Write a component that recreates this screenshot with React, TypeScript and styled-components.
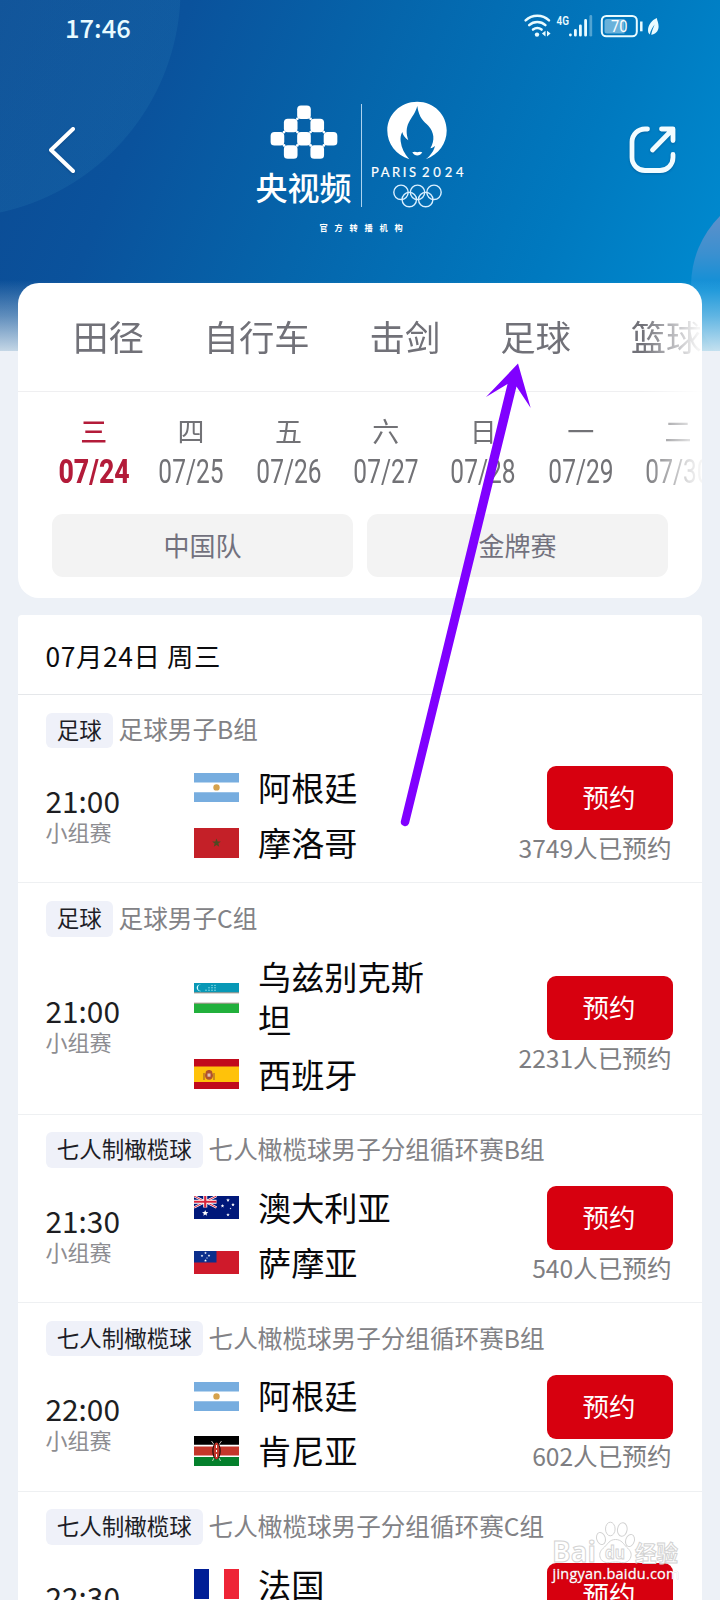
import React from 'react';
import styled, { createGlobalStyle } from 'styled-components';

const GlobalStyle = createGlobalStyle`
  *, *::before, *::after { box-sizing: border-box; }
  html, body { margin: 0; padding: 0; }
  body {
    background: #edf1f7;
    font-family: "Noto Sans CJK SC", "Noto Sans", sans-serif;
  }
  button { font-family: inherit; border: 0; margin: 0; }
`;

const Screen = styled.div`
  position: relative;
  width: 720px;
  height: 1600px;
  overflow: hidden;
  background: #edf1f7;
`;

const Hero = styled.header`
  position: relative;
  height: 351px;
  margin-bottom: -68px;
  overflow: hidden;
  background:
    radial-gradient(circle 229px at -48px -11px, rgba(40, 125, 180, 0.22) 99.6%, transparent 100%),
    linear-gradient(113deg, #0c4a93 0%, #0a529c 22%, #0565ab 46%, #0079bf 75%, #008dd2 100%);
`;

const Bubble = styled.span`
  position: absolute;
  left: 691px;
  top: 187px;
  width: 198px;
  height: 198px;
  border-radius: 50%;
  background: linear-gradient(180deg, #5f90ca 14%, #3a90d0 34%, #0a90d8 52%);
`;

const HeroFade = styled.span`
  position: absolute;
  inset: 280px 0 0 0;
  background: linear-gradient(180deg, rgba(232, 240, 244, 0) 0%, rgba(232, 240, 244, 0.38) 50%, rgba(232, 240, 244, 0.84) 100%);
`;

const StatusBar = styled.div`
  position: relative;
  display: flex;
  align-items: center;
  justify-content: space-between;
  height: 54px;
  padding: 0 58px 0 65px;
  color: #e9fbff;
`;

const Clock = styled.span`
  font-size: 25.5px;
  font-weight: 500;
  line-height: 54px;
`;

const NavBar = styled.div`
  position: relative;
  display: flex;
  align-items: flex-start;
  justify-content: space-between;
  padding: 46px 40px 0 44px;
`;

const NavButton = styled.button`
  margin-top: 24px;
  padding: 0;
  background: none;
  line-height: 0;
  filter: drop-shadow(0 1px 1px rgba(0, 40, 90, 0.3));
`;

const Brand = styled.div`
  display: flex;
  flex-direction: column;
  align-items: center;
  width: 220px;
  margin-left: 9px;
  color: #fff;
`;

const Lockup = styled.div`
  display: flex;
  width: 216px;
  height: 108px;
`;

const Channel = styled.div`
  display: flex;
  flex-direction: column;
  align-items: center;
  width: 110px;
  padding: 5px 4px 0 0;
  svg { display: block; }
`;

const ChannelName = styled.span`
  margin-top: 4px;
  font-size: 32px;
  line-height: 44px;
  font-weight: 500;
`;

const Divider = styled.i`
  width: 1px;
  height: 103px;
  margin-top: 4px;
  background: rgba(215, 238, 255, 0.8);
`;

const Games = styled.div`
  padding-left: 8px;
  svg { display: block; }
`;

const Caption = styled.span`
  margin: 9px 0 0 12px;
  font-size: 8.2px;
  line-height: 20px;
  font-weight: 700;
  letter-spacing: 6.8px;
`;

const FilterCard = styled.section`
  position: relative;
  width: 684px;
  height: 315px;
  margin: 0 auto;
  overflow: hidden;
  border-radius: 21px;
  background: #fff;
`;

const fadeRight = 'linear-gradient(90deg, #000 0, #000 624px, rgba(0,0,0,.08) 680px)';

const SportTabs = styled.nav`
  display: flex;
  gap: 59.8px;
  height: 109px;
  padding-left: 55px;
  border-bottom: 1px solid #efeff1;
  -webkit-mask-image: ${fadeRight};
  mask-image: ${fadeRight};
`;

const SportTab = styled.span`
  flex: none;
  color: #717178;
  font-size: 35.4px;
  line-height: 105px;
`;

const Days = styled.div`
  display: flex;
  height: 122px;
  padding: 21px 0 0 27px;
  -webkit-mask-image: ${fadeRight};
  mask-image: ${fadeRight};
`;

const Day = styled.div<{ $on?: boolean }>`
  display: flex;
  flex: 0 0 97.4px;
  flex-direction: column;
  align-items: center;
  color: ${(p) => (p.$on ? '#b31b39' : '#727276')};
  font-weight: ${(p) => (p.$on ? 500 : 400)};
`;

const Weekday = styled.span`
  font-size: 27px;
  line-height: 36px;
`;

const DayNumber = styled.span<{ $on?: boolean }>`
  margin-top: 3px;
  font-family: Roboto, sans-serif;
  font-size: 33.8px;
  line-height: 40px;
  font-weight: ${(p) => (p.$on ? 800 : 400)};
  transform: scaleX(${(p) => (p.$on ? 0.79 : 0.725)});
`;

const Filters = styled.div`
  display: flex;
  gap: 14px;
  padding: 0 34px;
`;

const FilterButton = styled.button`
  flex: 1;
  height: 63px;
  padding: 0 0 3px;
  border-radius: 11px;
  background: #f3f3f3;
  color: #72717d;
  font-size: 26px;
`;

const Schedule = styled.main`
  width: 684px;
  margin: 17px auto 0;
  border-radius: 4px 4px 0 0;
  background: #fff;
`;

const DateHeading = styled.h2`
  height: 80px;
  margin: 0;
  padding-left: 27.5px;
  border-bottom: 1px solid #e5e7ea;
  color: #0c0c0e;
  font-size: 26.4px;
  line-height: 82px;
  font-weight: 400;
  letter-spacing: 0.6px;
`;

const Match = styled.article`
  padding: 17.7px 29.5px 18px 27.5px;
  border-bottom: 1px solid #eef0f2;
`;

const MatchHead = styled.div`
  display: flex;
  align-items: center;
  gap: 5.5px;
  height: 35.5px;
`;

const Tag = styled.span`
  height: 35.5px;
  padding: 0 11.3px;
  border-radius: 6px;
  background: #eff1f9;
  color: #1d1d26;
  font-size: 22.5px;
  line-height: 33px;
`;

const Title = styled.span`
  color: #828286;
  font-size: 24.6px;
  line-height: 32px;
  padding-bottom: 4px;
`;

const MatchBody = styled.div`
  display: flex;
  align-items: center;
  margin-top: 18.2px;
`;

const Kickoff = styled.div`
  display: flex;
  flex-direction: column;
  width: 148.5px;
  padding-bottom: 2px;
`;

const Time = styled.span`
  color: #1d1e22;
  font-size: 29.8px;
  line-height: 33px;
`;

const Stage = styled.span`
  color: #8d8d91;
  font-size: 22px;
  line-height: 28px;
`;

const Teams = styled.div`
  display: flex;
  flex: 1;
  flex-direction: column;
  gap: 12px;
`;

const Team = styled.div`
  display: flex;
  align-items: center;
  gap: 19px;
  svg { flex: none; display: block; }
`;

const TeamName = styled.span`
  width: 180px;
  margin: -1.2px 0 1.2px;
  color: #08080a;
  font-size: 33.2px;
  line-height: 43px;
`;

const Booking = styled.div`
  display: flex;
  flex-direction: column;
  align-items: flex-end;
`;

const BookButton = styled.button`
  width: 126px;
  height: 64px;
  padding: 0 1px 3px 0;
  border-radius: 9px;
  background: #d7000f;
  color: #fff;
  font-size: 26.5px;
`;

const Booked = styled.span`
  padding: 0.5px 1px 0 0;
  color: #7e7e82;
  font-size: 24.6px;
  line-height: 33.5px;
`;

const Pointer = styled.svg`
  position: absolute;
  left: 396px;
  top: 360px;
  pointer-events: none;
`;

const Watermark = styled.svg`
  position: absolute;
  left: 548px;
  top: 1516px;
`;

const StatusIcons = () => (
  <svg width="140" height="30" viewBox="522 12 140 30" fill="none" stroke="#e9fbff" strokeLinecap="round">
    <g strokeWidth="2.5">
      <path d="M525.6 20.4a17 17 0 0 1 23.4 0" />
      <path d="M529.2 25.2a12 12 0 0 1 16.2 0" />
      <path d="M533 29.6a7 7 0 0 1 8.6 0" />
    </g>
    <circle cx="537" cy="34.6" r="2.2" fill="#e9fbff" stroke="none" />
    <path d="M545.5 30.8v5.6l-3.6-2.8zM547 30.8v5.6l3.6-2.8z" fill="#e9fbff" stroke="none" />
    <text x="556.5" y="24.8" fill="#e9fbff" stroke="none" fontFamily="Roboto, sans-serif" fontSize="13" fontWeight="600" textLength="12.5" lengthAdjust="spacingAndGlyphs">4G</text>
    <g strokeWidth="2.8">
      <path d="M570.4 34.8v.2M575.4 30.4v4.8M580.4 25.8v9.4M585.6 20.4v14.8" />
      <path d="M590.8 16.4v18.8" opacity=".35" />
    </g>
    <rect x="601.8" y="15.9" width="35" height="20.4" rx="4.5" strokeWidth="2" />
    <path d="M607 19h17.5v14.4H607a2.5 2.5 0 0 1-2.5-2.5v-9.4a2.5 2.5 0 0 1 2.5-2.5z" fill="#e9fbff" fillOpacity=".45" stroke="none" />
    <text x="611" y="32.4" fill="#fff" stroke="none" fontFamily="Roboto, sans-serif" fontSize="17" textLength="16.5" lengthAdjust="spacingAndGlyphs">70</text>
    <path d="M641.3 21.5v9.8" strokeWidth="2.5" strokeLinecap="butt" />
    <path d="M656.8 18c-5 2.200-8.800 7-8.800 12.200 0 1.800.6 3.200 1.600 4.200 1.300-3.800 2.800-7 5-9.800-1.500 3.800-2.600 6.400-3.400 10.200 4-.4 7.400-3.600 7.400-8.400 0-3.200-1.300-5.400-1.800-8.400z" fill="#e9fbff" stroke="none" />
  </svg>
);

const BackIcon = () => (
  <svg width="36" height="52" viewBox="44 124 36 52" fill="none" stroke="#fff" strokeWidth="4" strokeLinecap="round" strokeLinejoin="round">
    <path d="M73 129 51 150l22 21" />
  </svg>
);

const ShareIcon = () => (
  <svg width="52" height="52" viewBox="628 124 52 52" fill="none" stroke="#f2fcff" strokeWidth="4.8" strokeLinecap="round" strokeLinejoin="round">
    <path d="M647.500 129h-2.500a13 13 0 0 0-13 13v15.500a13 13 0 0 0 13 13h15a13 13 0 0 0 13-13v-3" />
    <path d="M661.500 129H673v11.500M672 130l-19.500 20" />
  </svg>
);

const CELLS = [[2, 0], [1, 1], [3, 1], [0, 2], [2, 2], [4, 2], [1, 3], [3, 3]];
const JOINTS = [[2, 1], [3, 1], [1, 2], [2, 2], [3, 2], [4, 2], [2, 3], [1, 3], [3, 3], [4, 3]];
const UNIT = 13.75;

const ChannelLogo = () => (
  <svg width="70" height="57" viewBox="-.6 -.6 70 57" fill="#fff">
    {CELLS.map(([x, y]) => (
      <rect key={`${x}${y}`} x={x * UNIT - 0.2} y={y * UNIT - 0.2} width={UNIT + 0.4} height={UNIT + 0.4} rx="4" />
    ))}
    {JOINTS.map(([x, y]) => (
      <circle key={`${x}${y}`} cx={x * UNIT} cy={y * UNIT} r="1.400" />
    ))}
  </svg>
);

const GamesLogo = () => (
  <svg width="96" height="110" viewBox="370 100 96 110" fill="#fff">
    <path d="M417.200 101.800c16.800 0 29.500 12.800 29.500 28.800 0 13-8 24-21 28.700 2-1.300 3.300-2.500 4.300-4 2.200-2.500 4-5.300 5-9.300-1.500 1.300-2.800 2-4.600 2.300 2.300-4 3.300-8 2.900-12-.5-4-2-7.400-5-10.600-4.500-4.400-9.300-7.600-11-19.700-1.600 6.500-5.600 11-8.500 16.500-2.800 5.600-2.700 11-.5 17.700-3.300-2.200-5.200-4.700-6-8.200-1.600 3-2.100 6-1.600 9.500.8 6.600 3.600 12.200 8.600 17.800-13.300-4.300-22-15.600-22-28.700 0-16 13-28.800 29.900-28.800z" />
    <path d="M412.300 152.200c2-.9 3.500-.6 5 0 1.500-.6 3-.9 5 0-1.400 2.200-3 3.300-5 3.300s-3.600-1.100-5-3.300z" />
    <text x="371" y="177" fontFamily="Lato, sans-serif" fontSize="13" stroke="#fff" strokeWidth=".2" textLength="45" lengthAdjust="spacing">PARIS</text>
    <text x="422" y="177" fontFamily="Lato, sans-serif" fontSize="13" stroke="#fff" strokeWidth=".2" textLength="41.500" lengthAdjust="spacing">2024</text>
    <g fill="none" stroke="#d9efff" strokeWidth="1.400">
      <circle cx="401" cy="192.300" r="7.200" />
      <circle cx="417.500" cy="192.300" r="7.200" />
      <circle cx="434" cy="192.300" r="7.200" />
      <circle cx="409.300" cy="199.600" r="7.200" />
      <circle cx="425.700" cy="199.600" r="7.200" />
    </g>
  </svg>
);

const star = (cx: number, cy: number, r: number) =>
  Array.from({ length: 10 }, (_, i) => {
    const a = (Math.PI / 5) * i - Math.PI / 2;
    const k = i % 2 ? r * 0.42 : r;
    return `${cx + k * Math.cos(a)},${cy + k * Math.sin(a)}`;
  }).join(' ');

type Country = 'ar' | 'ma' | 'uz' | 'es' | 'au' | 'ws' | 'ke' | 'fr' | 'us';

const FLAG_HEIGHT: Record<Country, number> = { ar: 29, ma: 30, uz: 30, es: 30, au: 23, ws: 23, ke: 30, fr: 30, us: 30 };

const FLAG_ART: Record<Country, React.ReactNode> = {
  ar: (
    <>
      <path fill="#fff" d="M0 0h45v29H0z" />
      <path fill="#77addf" d="M0 0h45v9.600H0zM0 19.200h45V29H0z" />
      <circle cx="22.500" cy="14.400" r="3.200" fill="#d6a24c" />
    </>
  ),
  ma: (
    <>
      <path fill="#c42028" d="M0 0h45v30H0z" />
      <polygon points={star(22.5, 15, 4.6)} fill="#4f4a22" />
    </>
  ),
  uz: (
    <>
      <path fill="#fff" d="M0 0h45v30H0z" />
      <path fill="#0898b6" d="M0 0h45v9.500H0z" />
      <path fill="#22b03c" d="M0 20.500h45V30H0z" />
      <path fill="#7d6a5a" d="M0 9.500h45v.7H0zM0 19.800h45v.7H0z" />
      <path fill="#d8fbff" d="M7.200 1.600a3.400 3.400 0 1 0 0 6.400 3.200 3.200 0 0 1 0-6.400z" />
      {[[21, 2.4], [18, 2.4], [18, 4.8], [21, 4.8], [15, 4.8], [15, 7.2], [18, 7.2], [21, 7.2], [12, 7.2]].map(([x, y]) => (
        <circle key={`${x}-${y}`} cx={x} cy={y} r=".7" fill="#9fe6ee" />
      ))}
    </>
  ),
  es: (
    <>
      <path fill="#c10a1c" d="M0 0h45v30H0z" />
      <path fill="#ffc20a" d="M0 7.500h45V23H0z" />
      <path fill="#b0522e" d="M12 12.500c1-2 5-2 6 0l1 3.500c0 3-1.500 4.800-4 4.800s-4-1.800-4-4.800z" />
      <path fill="#e0c1b5" d="M13.500 14.500h3v3.200h-3z" />
      <path stroke="#a8642c" strokeWidth="1.200" d="M10 14v7M20 14v7" />
    </>
  ),
  au: (
    <>
      <path fill="#00187a" d="M0 0h45v23H0z" />
      <path stroke="#fff" strokeWidth="2.400" d="m0 0 22.500 11.500M22.500 0 0 11.500" />
      <path stroke="#d8243c" strokeWidth="1" d="m0 0 22.500 11.500M22.500 0 0 11.500" />
      <path stroke="#fff" strokeWidth="4" d="M11.250 0v11.500M0 5.750h22.500" />
      <path stroke="#d8243c" strokeWidth="2.200" d="M11.250 0v11.500M0 5.750h22.500" />
      <g fill="#fff">
        <polygon points={star(11.2, 17.2, 3.3)} />
        <polygon points={star(34, 4.2, 1.9)} />
        <polygon points={star(28.5, 10, 1.9)} />
        <polygon points={star(39, 8.6, 1.9)} />
        <polygon points={star(34, 18.8, 1.9)} />
        <polygon points={star(36.5, 12.5, 1)} />
      </g>
    </>
  ),
  ws: (
    <>
      <path fill="#cf1a2b" d="M0 0h45v23H0z" />
      <path fill="#0b2e8c" d="M0 0h22.500v11.500H0z" />
      <g fill="#fff">
        <polygon points={star(11.5, 2, 1.4)} />
        <polygon points={star(8, 4.8, 1.4)} />
        <polygon points={star(15, 4.6, 1.4)} />
        <polygon points={star(13, 7, 0.9)} />
        <polygon points={star(11.5, 9.6, 1.5)} />
      </g>
    </>
  ),
  ke: (
    <>
      <path fill="#fff" d="M0 0h45v30H0z" />
      <path d="M0 0h45v8.800H0z" />
      <path fill="#c4362a" d="M0 10.400h45v9.200H0z" />
      <path fill="#04802c" d="M0 21h45v9H0z" />
      <path stroke="#f4e9e2" strokeWidth=".8" d="m17.500 5 2.500 3.500M27.500 5 25 8.500M20 22l-1.500 3M25 22l1.500 3" />
      <ellipse cx="22.500" cy="15" rx="4.200" ry="8.400" fill="#1c0a08" />
      <ellipse cx="22.500" cy="15" rx="3" ry="8.400" fill="#c4362a" />
      <path stroke="#fff" strokeWidth="1" d="M22.500 9v3M22.500 14v2M22.500 18v3" />
    </>
  ),
  fr: (
    <>
      <path fill="#fff" d="M0 0h45v30H0z" />
      <path fill="#001e96" d="M0 0h15v30H0z" />
      <path fill="#ee2436" d="M30 0h15v30H30z" />
    </>
  ),
  us: <path fill="#c10a1c" d="M0 0h45v30H0z" />,
};

const Flag = ({ code }: { code: Country }) => (
  <svg width="45" height={FLAG_HEIGHT[code]} viewBox={`0 0 45 ${FLAG_HEIGHT[code]}`}>
    {FLAG_ART[code]}
  </svg>
);

const SPORTS = ['田径', '自行车', '击剑', '足球', '篮球'];

const DAYS = [
  ['三', '07/24'],
  ['四', '07/25'],
  ['五', '07/26'],
  ['六', '07/27'],
  ['日', '07/28'],
  ['一', '07/29'],
  ['二', '07/30'],
];

interface MatchData {
  sport: string;
  title: string;
  time: string;
  booked: string;
  teams: [Country, string][];
}

const MATCHES: MatchData[] = [
  { sport: '足球', title: '足球男子B组', time: '21:00', booked: '3749人已预约', teams: [['ar', '阿根廷'], ['ma', '摩洛哥']] },
  { sport: '足球', title: '足球男子C组', time: '21:00', booked: '2231人已预约', teams: [['uz', '乌兹别克斯坦'], ['es', '西班牙']] },
  { sport: '七人制橄榄球', title: '七人橄榄球男子分组循环赛B组', time: '21:30', booked: '540人已预约', teams: [['au', '澳大利亚'], ['ws', '萨摩亚']] },
  { sport: '七人制橄榄球', title: '七人橄榄球男子分组循环赛B组', time: '22:00', booked: '602人已预约', teams: [['ar', '阿根廷'], ['ke', '肯尼亚']] },
  { sport: '七人制橄榄球', title: '七人橄榄球男子分组循环赛C组', time: '22:30', booked: '', teams: [['fr', '法国'], ['us', '']] },
];

const MatchRow = ({ match }: { match: MatchData }) => (
  <Match>
    <MatchHead>
      <Tag>{match.sport}</Tag>
      <Title>{match.title}</Title>
    </MatchHead>
    <MatchBody>
      <Kickoff>
        <Time>{match.time}</Time>
        <Stage>小组赛</Stage>
      </Kickoff>
      <Teams>
        {match.teams.map(([code, name]) => (
          <Team key={code}>
            <Flag code={code} />
            <TeamName>{name || '\u00a0'}</TeamName>
          </Team>
        ))}
      </Teams>
      <Booking>
        <BookButton>预约</BookButton>
        <Booked>{match.booked || '\u00a0'}</Booked>
      </Booking>
    </MatchBody>
  </Match>
);

const App = () => (
  <>
    <GlobalStyle />
    <Screen>
      <Hero>
        <Bubble />
        <HeroFade />
        <StatusBar>
          <Clock>17:46</Clock>
          <StatusIcons />
        </StatusBar>
        <NavBar>
          <NavButton aria-label="返回"><BackIcon /></NavButton>
          <Brand>
            <Lockup>
              <Channel>
                <ChannelLogo />
                <ChannelName>央视频</ChannelName>
              </Channel>
              <Divider />
              <Games><GamesLogo /></Games>
            </Lockup>
            <Caption>官方转播机构</Caption>
          </Brand>
          <NavButton aria-label="分享"><ShareIcon /></NavButton>
        </NavBar>
      </Hero>

      <FilterCard>
        <SportTabs>
          {SPORTS.map((name) => <SportTab key={name}>{name}</SportTab>)}
        </SportTabs>
        <Days>
          {DAYS.map(([weekday, date], i) => (
            <Day key={date} $on={i === 0}>
              <Weekday>{weekday}</Weekday>
              <DayNumber $on={i === 0}>{date}</DayNumber>
            </Day>
          ))}
        </Days>
        <Filters>
          <FilterButton>中国队</FilterButton>
          <FilterButton>金牌赛</FilterButton>
        </Filters>
      </FilterCard>

      <Schedule>
        <DateHeading>07月24日 周三</DateHeading>
        {MATCHES.map((match, i) => <MatchRow key={i} match={match} />)}
      </Schedule>

      <Pointer width="140" height="472" viewBox="396 360 140 472" fill="#8000ff">
        <path d="M518 363.500l12.700 44.500-14.200-21.500L409 823.600a4.300 4.300 0 0 1-8.200-2.200L507.500 384 486 397z" />
      </Pointer>

      <Watermark width="140" height="70" viewBox="548 1516 140 70">
        <g fill="#fff" fillOpacity=".85" stroke="#d3d3d3" strokeWidth="1" fontFamily="'Open Sans', sans-serif" fontWeight="700">
          <text x="552" y="1562" fontSize="29" textLength="44" lengthAdjust="spacingAndGlyphs">Bai</text>
          <ellipse cx="601" cy="1538.500" rx="4.300" ry="6.200" transform="rotate(-18 601 1538.500)" />
          <ellipse cx="610.300" cy="1529" rx="4.800" ry="6.800" />
          <ellipse cx="622.300" cy="1529.500" rx="4.800" ry="6.800" transform="rotate(8 622.300 1529.500)" />
          <ellipse cx="630" cy="1540.500" rx="4.300" ry="6.200" transform="rotate(18 630 1540.500)" />
          <path d="M615.500 1539.500c6 0 8 4.500 11 7.500 3.500 3.300 5.500 6 4.300 10-1.300 4.300-5 6.200-9.300 5.500-4-.7-8-.7-12 0-4.300.7-8.300-1.200-9.500-5.500-1-4 .7-6.700 4.500-10 3.300-3 5-7.500 11-7.500z" />
          <text x="605" y="1559" fontSize="17" textLength="20" lengthAdjust="spacingAndGlyphs">du</text>
          <text x="635" y="1561" fontSize="22" fontFamily="'Noto Sans CJK SC', sans-serif" textLength="43" lengthAdjust="spacingAndGlyphs">经验</text>
        </g>
        <text x="552.500" y="1579" fontSize="14.500" fontFamily="'Open Sans', sans-serif" fontWeight="500" fill="#fff" stroke="#c8c8c8" strokeWidth=".4" textLength="127" lengthAdjust="spacing" paintOrder="stroke">jingyan.baidu.com</text>
      </Watermark>
    </Screen>
  </>
);

export default App;
